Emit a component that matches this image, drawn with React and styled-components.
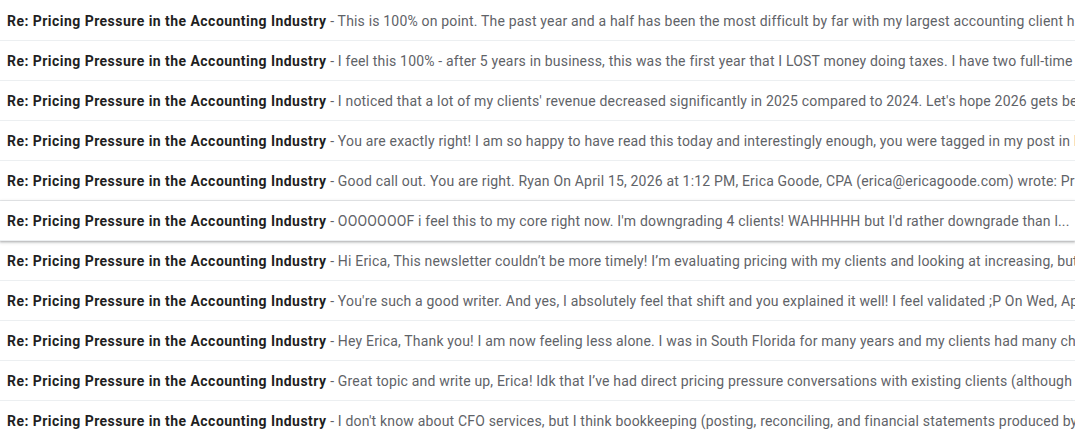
import React from 'react'
import styled, { createGlobalStyle } from 'styled-components'

const GlobalStyle = createGlobalStyle`
  html, body {
    margin: 0;
    padding: 0;
    background: #ffffff;
    overflow: hidden;
  }
  body {
    font-family: Roboto, "Noto Sans", "Liberation Sans", sans-serif;
  }
`

const List = styled.div`
  width: 1075px;
  height: 440px;
  padding-top: 1px;
  box-sizing: border-box;
  overflow: hidden;
  display: flex;
  flex-direction: column;
  background: #fff;
`

const Row = styled.div`
  height: 40px;
  flex: 0 0 40px;
  box-sizing: border-box;
  display: flex;
  align-items: center;
  padding-left: 7px;
  border-bottom: 1px solid #eceff1;
  position: relative;
  z-index: ${props => (props.hovered ? 2 : 1)};
  box-shadow: ${props =>
    props.hovered
      ? '0 1px 2px 0 rgba(60,64,67,.3), 0 1px 3px 1px rgba(60,64,67,.15)'
      : 'none'};
  white-space: nowrap;
  overflow: ${props => (props.hovered ? 'visible' : 'hidden')};
`

const Line = styled.div`
  white-space: nowrap;
  overflow: hidden;
  font-size: 14px;
  line-height: 20px;
`

const Subject = styled.span`
  font-weight: 700;
  color: #1f1f1f;
  letter-spacing: 0.46px;
`

const Snippet = styled.span`
  color: #5f6368;
  letter-spacing: 0.18px;
`

const messages = [
  "This is 100% on point. The past year and a half has been the most difficult by far with my largest accounting client has been",
  "I feel this 100% - after 5 years in business, this was the first year that I LOST money doing taxes. I have two full-time employees",
  "I noticed that a lot of my clients' revenue decreased significantly in 2025 compared to 2024. Let's hope 2026 gets better for everyone",
  "You are exactly right! I am so happy to have read this today and interestingly enough, you were tagged in my post in LinkedIn",
  "Good call out. You are right. Ryan On April 15, 2026 at 1:12 PM, Erica Goode, CPA (erica@ericagoode.com) wrote: Pricing",
  "OOOOOOOF i feel this to my core right now. I'm downgrading 4 clients! WAHHHHH but I'd rather downgrade than l...",
  "Hi Erica, This newsletter couldn\u2019t be more timely! I\u2019m evaluating pricing with my clients and looking at increasing, but I",
  "You're such a good writer. And yes, I absolutely feel that shift and you explained it well! I feel validated ;P On Wed, Apr 15",
  "Hey Erica, Thank you! I am now feeling less alone. I was in South Florida for many years and my clients had many choices",
  "Great topic and write up, Erica! Idk that I\u2019ve had direct pricing pressure conversations with existing clients (although some",
  "I don't know about CFO services, but I think bookkeeping (posting, reconciling, and financial statements produced by AI",
]

const App = () => {
  return (
    <>
      <GlobalStyle />
      <List>
        {messages.map((text, i) => (
          <Row key={i} hovered={i === 5}>
            <Line>
              <Subject>Re: Pricing Pressure in the Accounting Industry</Subject>
              <Snippet> - {text}</Snippet>
            </Line>
          </Row>
        ))}
      </List>
    </>
  )
}

export default App
